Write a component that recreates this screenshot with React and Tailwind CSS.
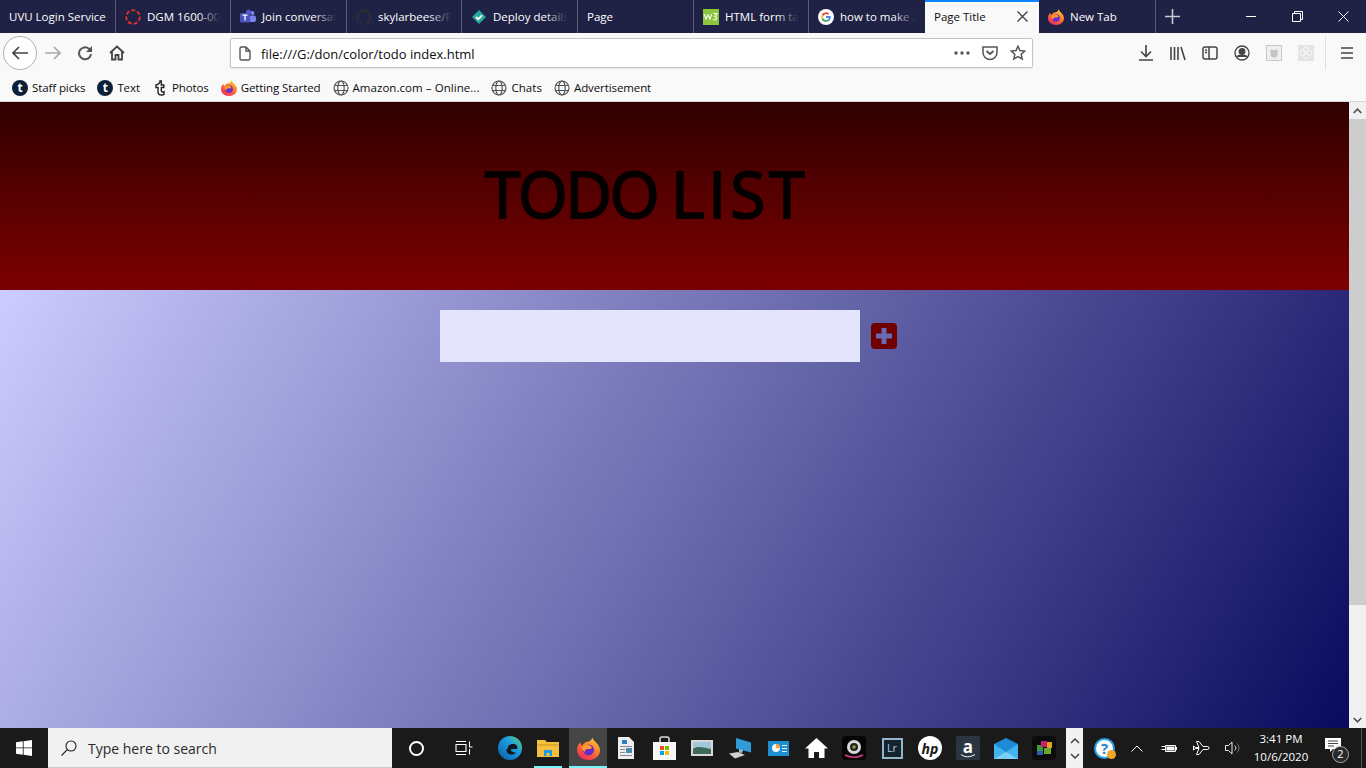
function Fire({ size = 16 }) {
  return (
    <svg width={size} height={size} viewBox="0 0 24 24">
      <defs>
        <linearGradient id="ffg" x1="0.8" y1="0" x2="0.2" y2="1">
          <stop offset="0" stopColor="#ffd33a" />
          <stop offset="0.45" stopColor="#ff7a2a" />
          <stop offset="1" stopColor="#f0245f" />
        </linearGradient>
      </defs>
      <path d="M16 .5c.5 2.500 2.500 3.500 4 5.500 2.500 2.500 4 5 4 8 0 5.500-5 10-12 10S0 19.500 0 13.500C0 10 1.500 7.500 3.500 5.500c0 1.500.5 2.500 2 3.500C6.500 6.500 9 5 11 5c2 0 4-1.500 5-4.500z" fill="url(#ffg)" />
      <circle cx="12" cy="13.500" r="5.800" fill="#6b2bc9" />
      <path d="M5.500 10c2-1.800 5.500-2.300 7.500-1.300 2 .8 3 2.500 2 3.500-1 .8-3 0-5 .5-1.500.5-2 1.500-1.500 3C6.500 15 5 12.500 5.500 10z" fill="#ff9a2e" />
    </svg>
  );
}

function Globe() {
  return (
    <svg width="16" height="16" viewBox="0 0 16 16" fill="none" stroke="#555" strokeWidth="1.200">
      <circle cx="8" cy="8" r="7" />
      <ellipse cx="8" cy="8" rx="3.200" ry="7" />
      <path d="M1.500 5.500h13M1.500 10.500h13" />
    </svg>
  );
}

function TumblrDot() {
  return (
    <span className="flex h-4 w-4 items-center justify-center rounded-full bg-[#0b2139] text-[12px] leading-none font-bold text-white">t</span>
  );
}

function Tab({ w, label, icon, fade, divider = true }) {
  return (
    <div className={`relative flex h-[33px] items-center overflow-hidden pt-px text-[11.5px] text-white ${w} ${divider ? "border-r border-[#5a5c78]" : ""}`}>
      <div className="flex items-center pl-[9px] whitespace-nowrap">
        {icon && <span className="mr-[6px] flex h-4 w-4 shrink-0 items-center justify-center">{icon}</span>}
        <span>{label}</span>
      </div>
      {fade && <div className="absolute top-0 right-0 h-full w-8 bg-[linear-gradient(to_right,#1f224400,#1f2244_70%)]" />}
    </div>
  );
}

function TabBar() {
  return (
    <div className="flex h-[33px] items-center bg-[#1f2244]">
      <Tab w="w-[116px]" label="UVU Login Service" />
      <Tab
        w="w-[115px]"
        label="DGM 1600-002"
        fade
        icon={
          <svg width="16" height="16" viewBox="0 0 16 16" fill="none">
            <circle cx="8" cy="8" r="6.800" stroke="#e0352b" strokeWidth="1.800" strokeDasharray="4 2" />
          </svg>
        }
      />
      <Tab
        w="w-[116px]"
        label="Join conversat"
        fade
        icon={
          <svg width="16" height="16" viewBox="0 0 16 16">
            <circle cx="12.500" cy="4" r="2" fill="#7b83eb" />
            <rect x="9" y="6.500" width="7" height="6.500" rx="2" fill="#7b83eb" />
            <circle cx="8.500" cy="3" r="2.500" fill="#5059c9" />
            <rect x="0" y="4" width="10" height="9.500" rx="1" fill="#4b53bc" />
            <path d="M2.500 6.200h5M5 6.200v5.300" stroke="#fff" strokeWidth="1.300" />
          </svg>
        }
      />
      <Tab
        w="w-[115px]"
        label="skylarbeese/P"
        fade
        icon={
          <svg width="16" height="16" viewBox="0 0 16 16" fill="#2a2c3a">
            <path d="M8 0a8 8 0 0 0-2.500 15.600c.4 0 .5-.2.5-.4v-1.500c-2.200.5-2.700-1-2.700-1-.4-.9-.9-1.200-.9-1.200-.7-.5 0-.5 0-.5.800 0 1.200.8 1.200.8.700 1.200 1.900.9 2.400.7 0-.5.300-.9.500-1.100-1.800-.2-3.600-.9-3.600-4 0-.9.300-1.600.8-2.100 0-.2-.4-1 .1-2.100 0 0 .7-.2 2.200.8a7.500 7.500 0 0 1 4 0c1.500-1 2.200-.8 2.200-.8.400 1.100.2 1.900.1 2.100.5.600.8 1.300.8 2.100 0 3.100-1.900 3.700-3.700 3.900.3.300.6.800.6 1.500v2.200c0 .2.100.5.600.4A8 8 0 0 0 8 0z" />
          </svg>
        }
      />
      <Tab
        w="w-[116px]"
        label="Deploy details"
        fade
        icon={
          <svg width="16" height="16" viewBox="0 0 16 16">
            <path d="M8 1l7 7-7 7-7-7z" fill="#25a99a" />
            <path d="M5 8l2.200 2.200L11 6.300" stroke="#fff" strokeWidth="1.800" fill="none" />
          </svg>
        }
      />
      <Tab w="w-[116px]" label="Page" />
      <Tab
        w="w-[115px]"
        label="HTML form ta"
        fade
        icon={
          <svg width="16" height="16" viewBox="0 0 16 16">
            <rect width="16" height="16" fill="#8cc63f" />
            <path d="M1 5l2 5 2-4 2 4 1.500-5M10.500 4.500H14L12 7.500c2 0 2 3.500 0 3.500-1 0-1.500-.5-1.500-1" stroke="#fff" strokeWidth="1.100" fill="none" />
          </svg>
        }
      />
      <Tab
        w="w-[116px]"
        label="how to make a"
        fade
        divider={false}
        icon={
          <svg width="16" height="16" viewBox="0 0 16 16">
            <circle cx="8" cy="8" r="8" fill="#fff" />
            <path d="M8 3.200a4.800 4.800 0 0 1 3.200 1.200L9.900 5.700A3 3 0 0 0 5.200 7L3.700 5.800A4.800 4.800 0 0 1 8 3.200z" fill="#ea4335" />
            <path d="M3.700 5.800L5.200 7a3 3 0 0 0 0 2L3.700 10.200a4.800 4.800 0 0 1 0-4.400z" fill="#fbbc05" />
            <path d="M3.700 10.200L5.200 9a3 3 0 0 0 4.500 1.500l1.400 1.200A4.800 4.800 0 0 1 3.700 10.200z" fill="#34a853" />
            <path d="M8 7.100h4.700c.3 1.800-.3 3.500-1.600 4.600L9.700 10.500c.6-.4 1-1 1.100-1.600H8z" fill="#4285f4" />
          </svg>
        }
      />
      <div className="flex h-[33px] w-[114px] items-center justify-between border-t-2 border-[#0a84ff] bg-[#f9f9fa] pr-[11px] pl-[9px] text-[11.5px] text-[#0c0c0d]">
        <span className="-mt-[2px]">Page Title</span>
        <svg width="11" height="11" viewBox="0 0 11 11" stroke="#444" strokeWidth="1.400" className="-mt-[2px]">
          <path d="M.5.500l10 10M10.500.500l-10 10" />
        </svg>
      </div>
      <Tab w="w-[117px]" label="New Tab" icon={<Fire />} />
      <svg width="15" height="15" viewBox="0 0 15 15" stroke="#c9cad4" strokeWidth="1.600" className="ml-[9px]">
        <path d="M7.500 0v15M0 7.500h15" />
      </svg>
      <div className="ml-auto flex h-full items-center text-white">
        <div className="flex w-[46px] items-center justify-center">
          <div className="h-px w-[10px] bg-white" />
        </div>
        <div className="flex w-[46px] items-center justify-center">
          <svg width="11" height="11" viewBox="0 0 11 11" fill="none" stroke="#fff">
            <path d="M.5 2.500h8v8h-8zM2.500 2.500v-2h8v8h-2" />
          </svg>
        </div>
        <div className="flex w-[46px] items-center justify-center">
          <svg width="11" height="11" viewBox="0 0 11 11" stroke="#fff">
            <path d="M.5.500l10 10M10.500.500l-10 10" />
          </svg>
        </div>
      </div>
    </div>
  );
}

function NavBar() {
  return (
    <div className="flex h-[41px] items-center bg-[#f9f9fa] pb-px">
      <div className="ml-[3px] flex h-[34px] w-[34px] items-center justify-center rounded-full border border-[#b1b1b3] bg-white">
        <svg width="16" height="14" viewBox="0 0 16 14" fill="none" stroke="#444" strokeWidth="1.700">
          <path d="M16 7H1.500M7 1L1 7l6 6" />
        </svg>
      </div>
      <svg width="16" height="14" viewBox="0 0 16 14" fill="none" stroke="#aaa" strokeWidth="1.700" className="ml-2">
        <path d="M0 7h14.500M9 1l6 6-6 6" />
      </svg>
      <svg width="16" height="16" viewBox="0 0 16 16" fill="none" stroke="#555" strokeWidth="2" className="ml-4">
        <path d="M14 9A6 6 0 1 1 12 3.800L14.500 6" />
        <path d="M15 1v6H9" strokeWidth="0" fill="#555" />
      </svg>
      <svg width="16" height="16" viewBox="0 0 16 16" fill="none" stroke="#444" strokeWidth="1.800" className="ml-4">
        <path d="M1 8l7-6.500L15 8M3 6.500V14.500h3.500V10h3v4.500H13V6.500" />
      </svg>
      <div className="ml-[105px] flex h-[30px] w-[803px] items-center rounded-[2px] border border-[#c4c4c4] bg-white pr-[6px] pl-[8px] shadow-[0_1px_2px_rgba(0,0,0,0.08)]">
        <svg width="12" height="15" viewBox="0 0 12 15" fill="none" stroke="#555" strokeWidth="1.400">
          <path d="M1 2.500A1.500 1.500 0 0 1 2.500 1H7l4 4v7.500A1.500 1.500 0 0 1 9.500 14h-7A1.500 1.500 0 0 1 1 12.500zM7 1v4h4" />
        </svg>
        <span className="mt-[4px] ml-[10px] text-[13px] text-[#0c0c0d]">file:///G:/don/color/todo index.html</span>
        <svg width="16" height="4" viewBox="0 0 16 4" fill="#555" className="ml-auto">
          <circle cx="2" cy="2" r="1.700" />
          <circle cx="8" cy="2" r="1.700" />
          <circle cx="14" cy="2" r="1.700" />
        </svg>
        <svg width="16" height="15" viewBox="0 0 16 15" fill="none" stroke="#555" strokeWidth="1.500" className="ml-[12px]">
          <path d="M1 1h14v5.500a7 7 0 0 1-14 0z" />
          <path d="M4.500 5l3.500 3 3.500-3" strokeWidth="1.800" />
        </svg>
        <svg width="16" height="16" viewBox="0 0 16 16" fill="none" stroke="#555" strokeWidth="1.500" className="ml-[12px]">
          <path d="M8 1.200l2 4.400 4.800.5-3.600 3.200 1 4.700L8 11.600l-4.200 2.400 1-4.700L1.200 6.100 6 5.600z" />
        </svg>
      </div>
      <svg width="14" height="16" viewBox="0 0 14 16" fill="none" stroke="#444" strokeWidth="1.600" className="ml-[106px]">
        <path d="M7 0v11M2 6.500L7 11.500l5-5M0 15h14" />
      </svg>
      <svg width="16" height="15" viewBox="0 0 16 15" fill="none" stroke="#444" strokeWidth="1.600" className="ml-[17px]">
        <path d="M1 1v13M4.500 1v13M8 1v13M11 1l4 13" />
      </svg>
      <svg width="16" height="14" viewBox="0 0 16 14" fill="none" stroke="#444" strokeWidth="1.500" className="ml-[16px]">
        <rect x="1" y="1" width="14" height="12" rx="2" />
        <path d="M7 1v12M3 4h2M3 6.500h2" />
      </svg>
      <svg width="16" height="16" viewBox="0 0 16 16" fill="none" stroke="#444" strokeWidth="1.300" className="ml-[16px]">
        <circle cx="8" cy="8" r="7" />
        <circle cx="8" cy="6.500" r="2.800" fill="#444" />
        <path d="M3 12c1-2.500 9-2.500 10 0" fill="#444" />
      </svg>
      <svg width="16" height="16" viewBox="0 0 16 16" className="ml-[16px]">
        <rect x=".5" y=".5" width="15" height="15" fill="#efefef" stroke="#c8c8c8" />
        <path d="M4.500 4l1.500 1h4l1.500-1v5a3.500 3.500 0 0 1-7 0z" fill="#c4c4c4" />
      </svg>
      <svg width="16" height="16" viewBox="0 0 16 16" fill="none" stroke="#f6f6f6" className="ml-[16px]">
        <rect width="16" height="16" fill="#e4e4e4" stroke="none" />
        <circle cx="8" cy="4.500" r="2.500" />
        <circle cx="8" cy="11.500" r="2.500" />
        <circle cx="4.500" cy="8" r="2.500" />
        <circle cx="11.500" cy="8" r="2.500" />
      </svg>
      <div className="ml-[11px] h-[34px] w-px bg-[#e0e0e1]" />
      <svg width="12" height="12" viewBox="0 0 12 12" stroke="#444" strokeWidth="1.600" className="ml-[15px]">
        <path d="M0 1h12M0 6h12M0 11h12" />
      </svg>
    </div>
  );
}

function Bookmark({ icon, label, tight = true }) {
  return (
    <div className="flex items-center whitespace-nowrap">
      {icon}
      <span className={`mt-px ml-1 text-[11.5px] text-[#0c0c0d] ${tight ? "tracking-[-0.1px]" : "tracking-[0.05px]"}`}>{label}</span>
    </div>
  );
}

function BookmarkBar() {
  return (
    <div className="flex h-[28px] items-center gap-3 border-b border-[#d6d6d7] bg-[#f9f9fa] pl-3">
      <Bookmark icon={<TumblrDot />} label="Staff picks" />
      <Bookmark icon={<TumblrDot />} label="Text" />
      <Bookmark
        icon={
          <svg width="16" height="16" viewBox="0 0 16 16" fill="#fff" stroke="#222" strokeWidth="1.400">
            <path d="M8 1C8 3 6 4.500 4 5v2.500h2V12c0 2 1.500 3 3.500 3 1 0 2-.2 2.500-.6v-2.700c-1 .6-2.700.6-2.700-.9V7.500h2.500V5H9.300V1z" />
          </svg>
        }
        label="Photos"
      />
      <Bookmark icon={<Fire />} label="Getting Started" />
      <Bookmark icon={<Globe />} label="Amazon.com – Online..." tight={false} />
      <Bookmark icon={<Globe />} label="Chats" tight={false} />
      <Bookmark icon={<Globe />} label="Advertisement" />
    </div>
  );
}

function Scrollbar() {
  return (
    <div className="flex w-[17px] shrink-0 flex-col bg-[#f0f0f0]">
      <div className="flex h-[17px] items-center justify-center">
        <svg width="9" height="6" viewBox="0 0 9 6" fill="none" stroke="#505050" strokeWidth="1.700">
          <path d="M.7 5L4.500 1.200 8.300 5" />
        </svg>
      </div>
      <div className="h-[486px] bg-[#cdcdcd]" />
      <div className="flex-1" />
      <div className="flex h-[17px] items-center justify-center">
        <svg width="9" height="6" viewBox="0 0 9 6" fill="none" stroke="#505050" strokeWidth="1.700">
          <path d="M.7 1L4.500 4.800 8.300 1" />
        </svg>
      </div>
    </div>
  );
}

function Page() {
  return (
    <div className="flex h-[626px]">
      <div className="flex min-w-0 flex-1 flex-col">
        <header className="flex h-[188px] items-center bg-[linear-gradient(#300000,#7d0000)] pl-[485px]">
          {/* the two words need different tracking to land on the reference widths */}
          <h1 className="-mt-[4px] text-[64px] leading-none font-normal whitespace-nowrap text-[#050000] [-webkit-text-stroke:2px_#050000]">
            <span className="tracking-[-2.25px]">TODO</span> <span className="-ml-[3px] tracking-[4px]">LIST</span>
          </h1>
        </header>
        <main className="flex-1 bg-[linear-gradient(120deg,#ccccff,#0a0a5e)] pt-5 pl-[440px]">
          <div className="flex items-center">
            <input className="h-[52px] w-[420px] bg-[#e4e4fd] outline-none" />
            <button className="ml-[11px] flex h-[26px] w-[26px] items-center justify-center rounded-[4px] bg-[#6e0000]">
              <svg width="18" height="18" viewBox="0 0 18 18" fill="#6a6ab0">
                <path d="M6.500 1h5v5.500H17v5h-5.500V17h-5v-5.500H1v-5h5.500z" />
              </svg>
            </button>
          </div>
        </main>
      </div>
      <Scrollbar />
    </div>
  );
}

function TaskCell({ children, active, running, w = "w-[38px]" }) {
  return (
    <div className={`relative flex h-10 shrink-0 items-center justify-center ${w} ${active ? "bg-[#454545]" : ""}`}>
      {children}
      {running && <div className={`absolute bottom-0 h-[2px] bg-[#76f6fb] ${active ? "inset-x-0" : "inset-x-[5px]"}`} />}
    </div>
  );
}

function Taskbar() {
  return (
    <div className="flex h-10 items-center bg-[#1a1a1a]">
      <div className="flex h-10 w-12 items-center justify-center">
        <svg width="16" height="16" viewBox="0 0 16 16" fill="#fff">
          <path d="M0 2.300l6.800-1v6.200H0zM7.600 1.200L16 0v7.500H7.600zM0 8.300h6.800v6.400l-6.800-1zM7.600 8.300H16V16l-8.400-1.200z" />
        </svg>
      </div>
      <div className="flex h-10 w-[344px] items-center border-b border-[#c8c8c8] bg-[#f1f1f1] pl-[13px] text-[14px] text-[#2a2a2a]">
        <svg width="16" height="16" viewBox="0 0 16 16" fill="none" stroke="#222" strokeWidth="1.100">
          <circle cx="10" cy="6" r="5" />
          <path d="M6.300 9.700L.5 15.500" />
        </svg>
        <span className="mt-[2px] ml-[11px]">Type here to search</span>
      </div>
      <TaskCell w="w-12">
        <div className="h-[15px] w-[15px] rounded-full border-2 border-white" />
      </TaskCell>
      <TaskCell w="w-12">
        <svg width="18" height="14" viewBox="0 0 18 14" fill="none" stroke="#fff" strokeWidth="1.100">
          <path d="M1 3.500h10v7H1zM1 .5h10M1 13.500h10M14.500 .5v5.500h3M14.500 8v5.500" />
        </svg>
      </TaskCell>
      <div className="w-[3px] shrink-0" />
      <TaskCell>
        <svg width="24" height="24" viewBox="0 0 24 24">
          <defs>
            <linearGradient id="edg" x1="0" y1="1" x2="1" y2="0">
              <stop offset="0" stopColor="#0c59a4" />
              <stop offset="0.6" stopColor="#1b9de2" />
              <stop offset="1" stopColor="#5fd86a" />
            </linearGradient>
          </defs>
          <circle cx="12" cy="12" r="12" fill="url(#edg)" />
          <path d="M10 12c0-3 3-4.500 6-4 3 .6 4 3 3 5h-6c-.5 2 2 4 5 3.500-2 3-9 3-9.500-2-.2-1 .5-2 1.500-2.500z" fill="#14161c" />
        </svg>
      </TaskCell>
      <TaskCell running>
        <svg width="22" height="20" viewBox="0 0 22 20">
          <path d="M0 2h8l2 2h12v15H0z" fill="#f4c13e" />
          <path d="M0 6h22v2H0z" fill="#e2a92a" />
          <path d="M7 12h8v6h-2.500v-3h-3v3H7z" fill="#1e9be0" />
        </svg>
      </TaskCell>
      <div className="w-[2px] shrink-0" />
      <TaskCell active running>
        <Fire size={23} />
      </TaskCell>
      <TaskCell>
        <svg width="16" height="22" viewBox="0 0 16 22">
          <path d="M0 0h11l5 5v17H0z" fill="#eeeeee" />
          <path d="M4 3h5v4H4z" fill="#2a7fc7" />
          <path d="M2 9h12v1H2zM2 12h5v1H2zM2 15h5v1H2zM2 18h12v1H2z" fill="#889" />
          <path d="M8 11h6v5H8z" fill="#4c8ba8" />
        </svg>
      </TaskCell>
      <TaskCell>
        <svg width="23" height="24" viewBox="0 0 23 24">
          <path d="M0 6h23v18H0z" fill="#f6f6f6" />
          <path d="M7 6V3a2 2 0 0 1 2-2h5a2 2 0 0 1 2 2v3" fill="none" stroke="#ddd" strokeWidth="1.500" />
          <path d="M7 10h4v4H7z" fill="#f25022" />
          <path d="M12 10h4v4h-4z" fill="#7fba00" />
          <path d="M7 15h4v4H7z" fill="#00a4ef" />
          <path d="M12 15h4v4h-4z" fill="#ffb900" />
        </svg>
      </TaskCell>
      <TaskCell>
        <svg width="22" height="16" viewBox="0 0 22 16">
          <rect width="22" height="16" fill="#d8d8d8" />
          <rect x="2" y="2" width="18" height="12" fill="#9fc8d8" />
          <path d="M2 9c4-3 8-2 18 0v5H2z" fill="#3f6a58" />
        </svg>
      </TaskCell>
      <TaskCell>
        <svg width="23" height="21" viewBox="0 0 23 21">
          <path d="M7 0l15 4.500v10L7 10.500z" fill="#2f9bd8" />
          <path d="M10 11l4 1-1 3-3-.5z" fill="#8ac2e0" />
          <path d="M0 15.500l9-1.500 7 3-10 3.500z" fill="#cfcfcf" />
        </svg>
      </TaskCell>
      <TaskCell>
        <svg width="21" height="15" viewBox="0 0 21 15">
          <rect width="21" height="15" fill="#1d8fd0" />
          <circle cx="8" cy="7" r="4" fill="#f4f4f4" />
          <path d="M8 7V3a4 4 0 0 1 4 4z" fill="#f0a030" />
          <path d="M14 4h5v1h-5zM14 7h5v1h-5zM14 10h5v1h-5z" fill="#e5f3fb" />
        </svg>
      </TaskCell>
      <TaskCell>
        <svg width="23" height="20" viewBox="0 0 23 20" fill="#fff">
          <path d="M11.500 0L23 10.500h-3.500V20h-5.500v-6H9v6H3.500v-9.500H0z" />
        </svg>
      </TaskCell>
      <TaskCell>
        <svg width="24" height="24" viewBox="0 0 24 24">
          <rect width="24" height="24" rx="4" fill="#050505" />
          <circle cx="12" cy="11" r="7" fill="#d8d8d8" />
          <circle cx="12" cy="11" r="4" fill="#222" />
          <circle cx="12" cy="11" r="1.800" fill="#7faa3a" />
          <path d="M3 19c5 3 13 3 18 0" fill="none" stroke="#d33a8a" strokeWidth="1.500" />
        </svg>
      </TaskCell>
      <TaskCell>
        <div className="flex h-[21px] w-[21px] items-center justify-center border-2 border-[#8fb6cb] bg-[#14232c] text-[11px] text-[#a9cfe4]">Lr</div>
      </TaskCell>
      <TaskCell>
        <div className="flex h-6 w-6 items-center justify-center rounded-full bg-white text-[14px] font-bold text-[#1a1a1a] italic">hp</div>
      </TaskCell>
      <TaskCell>
        <div className="relative flex h-6 w-6 items-center justify-center rounded-[2px] bg-[#2c3542] pb-[3px] text-[17px] leading-none font-bold text-white">
          a
          <svg width="14" height="4" viewBox="0 0 14 4" fill="none" stroke="#fff" className="absolute bottom-[2px] left-[5px]">
            <path d="M0 .5c4 3 9 3 14 0" />
          </svg>
        </div>
      </TaskCell>
      <TaskCell>
        <svg width="24" height="21" viewBox="0 0 24 21">
          <path d="M0 6L12 0l12 6v15H0z" fill="#1f8ad8" />
          <path d="M0 6l12 8 12-8v15H0z" fill="#41b4f0" />
          <path d="M0 21l12-7 12 7z" fill="#7ccff5" />
        </svg>
      </TaskCell>
      <TaskCell>
        <svg width="24" height="24" viewBox="0 0 24 24">
          <rect width="24" height="24" rx="4" fill="#0c0c0c" />
          <path d="M5 9h6v6H5z" fill="#3d9a3d" />
          <path d="M9 5h6v6H9z" fill="#c81e6e" />
          <path d="M15 6h5v6h-5z" fill="#e8a11f" />
          <path d="M12 12h7v6h-7z" fill="#6aa62b" />
          <path d="M5 15h6v4H5z" fill="#2a5fa8" />
        </svg>
      </TaskCell>
      <div className="ml-[3px] flex h-10 w-[17px] flex-col items-center justify-around bg-[#f1f1f1] py-[5px]">
        <svg width="10" height="6" viewBox="0 0 10 6" fill="none" stroke="#444" strokeWidth="1.500">
          <path d="M1 5l4-4 4 4" />
        </svg>
        <svg width="10" height="6" viewBox="0 0 10 6" fill="none" stroke="#444" strokeWidth="1.500">
          <path d="M1 1l4 4 4-4" />
        </svg>
      </div>
      <div className="relative ml-[11px] flex h-[21px] w-[21px] items-center justify-center rounded-full border-2 border-[#27a2e8] bg-white text-[15px] leading-none font-bold text-[#1a86cc]">
        ?
        <div className="absolute -right-[3px] -bottom-[2px] h-[9px] w-[9px] rounded-full bg-[#f5a623]" />
      </div>
      <svg width="12" height="7" viewBox="0 0 12 7" fill="none" stroke="#fff" className="ml-[16px]">
        <path d="M.5 6.500L6 1l5.500 5.500" />
      </svg>
      <svg width="16" height="11" viewBox="0 0 16 11" fill="none" stroke="#fff" className="ml-[18px]">
        <path d="M4.500 2.500h10v6h-10zM.5 3.500h4M.5 6.500h4M15.500 4v3" />
        <rect x="6" y="4" width="7" height="3" fill="#fff" />
      </svg>
      <svg width="17" height="14" viewBox="0 0 17 14" fill="none" stroke="#fff" className="ml-[16px]">
        <path d="M.5 5l2 1.500H6L3.500.5H6L10 5.500h4.500a1.500 1.500 0 0 1 0 3H10L6 13.500H3.500L6 7.500H2.500L.5 9z" />
      </svg>
      <svg width="16" height="14" viewBox="0 0 16 14" fill="none" stroke="#fff" strokeWidth="0.900" className="ml-[15px]">
        <path d="M.5 4.500h3L7 1v12L3.500 9.500h-3z" />
        <path d="M9.500 4.500a3 3 0 0 1 0 5" />
        <path d="M12 2.500a6 6 0 0 1 0 9" stroke="#888" />
      </svg>
      <div className="ml-[8px] flex w-[64px] flex-col items-center text-[11.5px] leading-[18px] text-white">
        <span>3:41 PM</span>
        <span>10/6/2020</span>
      </div>
      <div className="relative ml-[12px] h-[15px] w-4 -translate-y-[3px]">
        <svg width="16" height="15" viewBox="0 0 16 15" fill="#fff">
          <path d="M0 0h16v11H8l-3 3v-3H0z" />
          <path d="M3 3h10M3 5.500h10M3 8h6" stroke="#444" />
        </svg>
        <div className="absolute top-[8px] left-[7px] flex h-[17px] w-[17px] items-center justify-center rounded-full border border-[#aaa] bg-[#2a2a2a] text-[11px] text-white">2</div>
      </div>
      <div className="mr-[4px] ml-auto h-full w-px bg-[#555]" />
    </div>
  );
}

export default function App() {
  return (
    <div className="flex h-[768px] w-[1366px] flex-col overflow-hidden font-['Open_Sans','Noto_Sans',sans-serif]">
      <TabBar />
      <NavBar />
      <BookmarkBar />
      <Page />
      <Taskbar />
    </div>
  );
}
